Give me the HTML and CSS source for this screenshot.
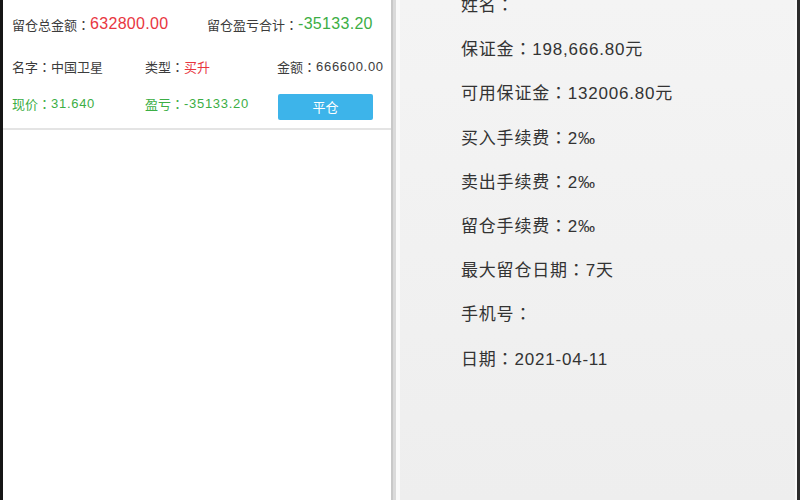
FILE: index.html
```html
<!DOCTYPE html>
<html lang="zh-CN">
<head>
<meta charset="utf-8">
<title>持仓</title>
<link rel="stylesheet" href="styles.css">
</head>
<body>
<div class="screen">
  <section class="pos">
    <div class="summary">
      <div class="cell"><span class="lbl">留仓总金额<span class="c" lang="zh-TW">：</span></span><span class="big red">632800.00</span></div>
      <div class="cell"><span class="lbl">留仓盈亏合计<span class="c" lang="zh-TW">：</span></span><span class="big green">-35133.20</span></div>
    </div>
    <div class="card">
      <div class="row">
        <div class="cell"><span class="lbl">名字<span class="c" lang="zh-TW">：</span>中国卫星</span></div>
        <div class="cell"><span class="lbl">类型<span class="c" lang="zh-TW">：</span></span><span class="red">买升</span></div>
        <div class="cell"><span class="lbl">金额<span class="c" lang="zh-TW">：</span></span><span class="num lbl">666600.00</span></div>
      </div>
      <div class="row row-b">
        <div class="cell green"><span>现价<span class="c" lang="zh-TW">：</span></span><span class="num">31.640</span></div>
        <div class="cell green"><span>盈亏<span class="c" lang="zh-TW">：</span></span><span class="num">-35133.20</span></div>
        <div class="cell"><button class="btn" type="button">平仓</button></div>
      </div>
    </div>
  </section>
  <div class="divider"></div>
  <section class="info">
    <ul class="list">
      <li>姓名<span class="c" lang="zh-TW">：</span></li>
      <li>保证金<span class="c" lang="zh-TW">：</span>198,666.80元</li>
      <li>可用保证金<span class="c" lang="zh-TW">：</span>132006.80元</li>
      <li>买入手续费<span class="c" lang="zh-TW">：</span>2‰</li>
      <li>卖出手续费<span class="c" lang="zh-TW">：</span>2‰</li>
      <li>留仓手续费<span class="c" lang="zh-TW">：</span>2‰</li>
      <li>最大留仓日期<span class="c" lang="zh-TW">：</span>7天</li>
      <li>手机号<span class="c" lang="zh-TW">：</span></li>
      <li>日期<span class="c" lang="zh-TW">：</span>2021-04-11</li>
    </ul>
  </section>
</div>
</body>
</html>
```

FILE: styles.css
```css
* { box-sizing: border-box; }
html, body {
  margin: 0;
  padding: 0;
  width: 800px;
  height: 500px;
  overflow: hidden;
  background: #ffffff;
  font-family: "Liberation Sans", "Noto Sans CJK SC", sans-serif;
}
.c {
  font-family: "Noto Sans CJK TC", "Noto Sans CJK JP", sans-serif;
}
.screen {
  display: flex;
  width: 800px;
  height: 500px;
  border-left: 3px solid #151515;
  border-right: 3px solid #2c2c2c;
}
.pos {
  width: 390px;
  flex: none;
  background: #ffffff;
  border-right: 2px solid #c8c8c8;
}
.summary {
  display: grid;
  grid-template-columns: 195px 1fr;
  align-items: center;
  height: 48px;
  padding-left: 9px;
}
.card {
  padding-left: 9px;
  padding-bottom: 4px;
  border-bottom: 2px solid #e4e4e4;
}
.row {
  display: grid;
  grid-template-columns: 133px 132px 1fr;
  align-items: center;
  height: 38px;
}
.row:first-child { padding-bottom: 2px; }
.row-b .cell.green { margin-top: -3px; }
.cell {
  font-size: 13px;
  white-space: nowrap;
  display: flex;
  align-items: center;
}
.lbl { color: #3c3c3c; }
.big {
  font-size: 16px;
  letter-spacing: 0.3px;
}
.num { letter-spacing: 0.7px; }
.red { color: #e8363f; }
.green { color: #3cae45; }
.btn {
  width: 95px;
  height: 26px;
  margin-left: 1px;
  margin-top: 3px;
  border: none;
  border-radius: 2px;
  background: #3db4ea;
  color: #ffffff;
  font-family: "Noto Sans CJK SC", sans-serif;
  font-size: 13px;
  padding: 0;
}
.divider {
  width: 7px;
  flex: none;
  background: linear-gradient(to right, #dadada 0, #dadada 3px, #f9f9f9 3px, #f9f9f9 100%);
}
.info {
  flex: 1;
  background: linear-gradient(to bottom, #f4f4f4, #eeeeee);
  border-right: 2px solid #fafafa;
  padding-left: 61px;
  overflow: hidden;
}
.list {
  list-style: none;
  margin: -18px 0 0 0;
  padding: 0;
}
.list li {
  font-size: 17px;
  line-height: 44.2px;
  height: 44.2px;
  color: #333333;
  white-space: nowrap;
  letter-spacing: 0.8px;
}
```
